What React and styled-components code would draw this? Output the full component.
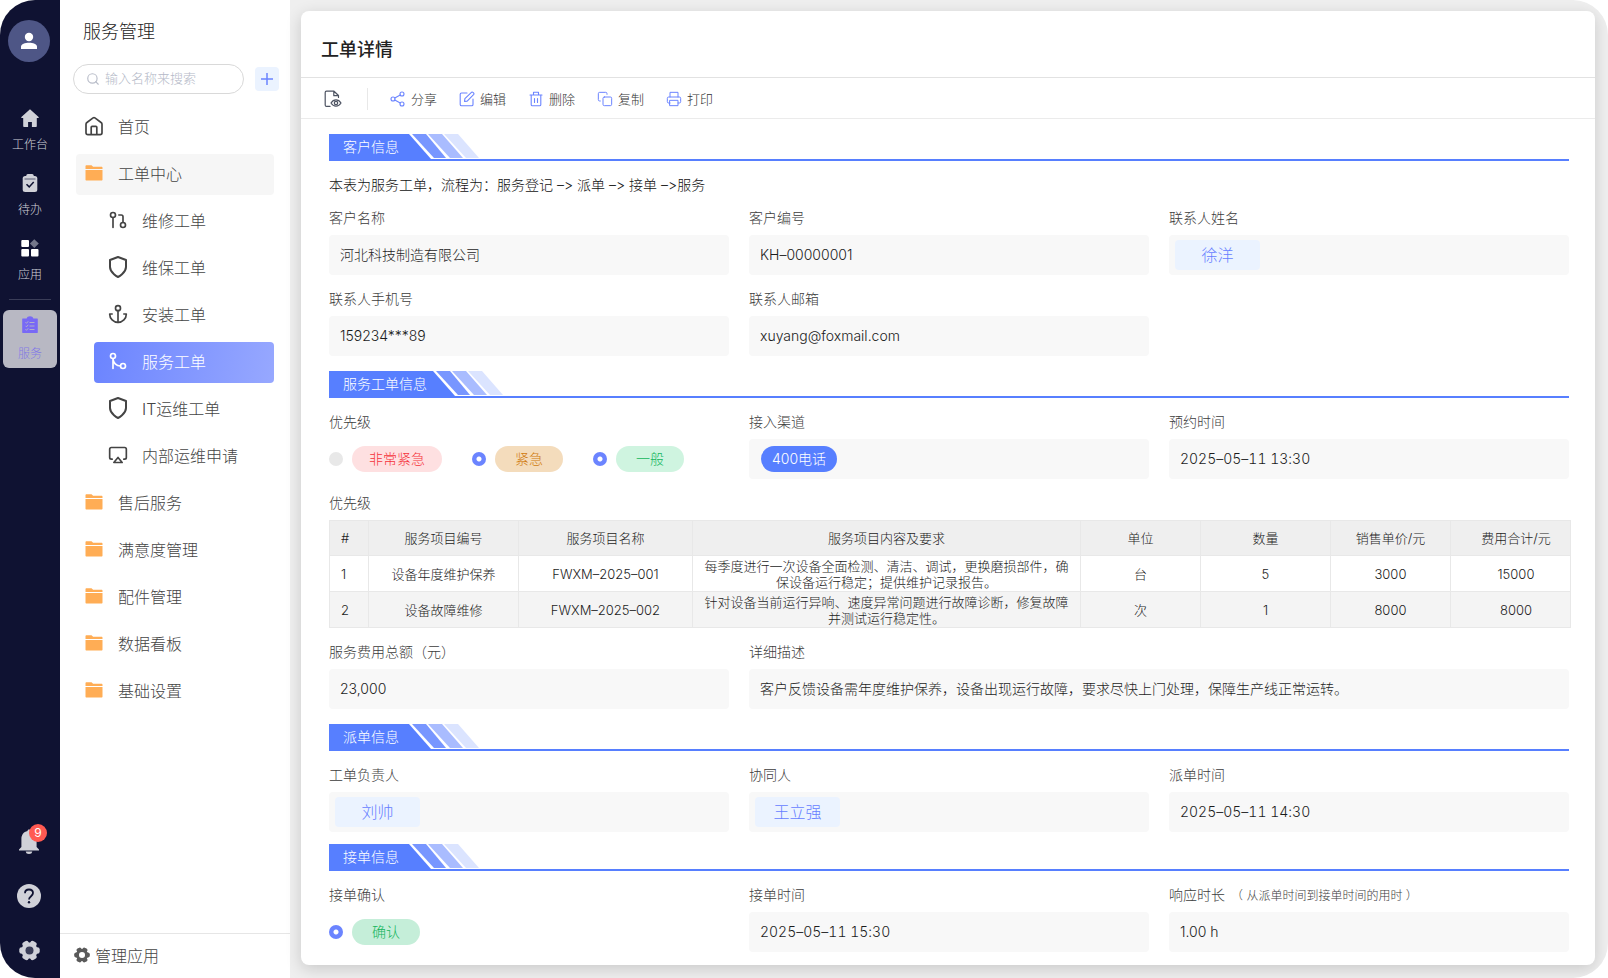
import React, { useState } from 'react'
import styled, { createGlobalStyle, css } from 'styled-components'
import { FiAirplay, FiAnchor, FiCopy, FiGitMerge, FiGitPullRequest, FiPrinter, FiSearch, FiShield } from 'react-icons/fi'

const GlobalStyle = createGlobalStyle`
  * {
    box-sizing: border-box;
  }
  body {
    margin: 0;
    background: #fff;
    color: #1c1c1c;
    font-family: Inter, 'Noto Sans CJK SC', sans-serif;
    font-size: 14px;
    font-weight: 300;
    font-feature-settings: 'calt' 0;
  }
  a {
    color: inherit;
    text-decoration: none;
  }
  button, input {
    font: inherit;
    font-feature-settings: inherit;
    color: inherit;
  }
  button {
    border: 0;
    padding: 0;
    background: none;
    cursor: pointer;
  }
  svg {
    display: block;
    flex: none;
  }
`

const Shell = styled.div`
  display: flex;
  min-height: 100vh;
  border-radius: 35px;
  overflow: hidden;
  background: #efefef;
`

/* rail */

const Rail = styled.nav`
  width: 60px;
  flex: none;
  display: flex;
  flex-direction: column;
  align-items: center;
  padding: 20px 0 16px;
  background: #0f1232;
  color: #d0d1d8;
`

const Avatar = styled.button`
  width: 42px;
  height: 42px;
  display: flex;
  align-items: center;
  justify-content: center;
  margin-right: 2px;
  border-radius: 50%;
  background: #4e5686;
  color: #fff;
`

const RailLinks = styled.div`
  display: flex;
  flex-direction: column;
  align-items: center;
  gap: 20px;
  margin-top: 47px;
`

const RailLink = styled.a`
  display: flex;
  flex-direction: column;
  align-items: center;
  gap: 9px;
  font-size: 12px;
  line-height: 18px;
  ${({ $active }) => $active && css`
    width: 54px;
    height: 58px;
    gap: 11px;
    padding-top: 6px;
    border-radius: 6px;
    background: #b8b8c3;
    color: #8379e6;
  `}
`

const RailDivider = styled.hr`
  width: 42px;
  height: 1px;
  margin: 15px 0 10px;
  border: 0;
  background: #3a3d58;
`

const RailBottom = styled.div`
  display: flex;
  flex-direction: column;
  gap: 30px;
  margin: auto 2px 0 0;
`

const RailButton = styled.button`
  position: relative;
  width: 24px;
  height: 24px;
  display: flex;
  align-items: center;
  justify-content: center;
`

const Count = styled.span`
  position: absolute;
  top: -6px;
  right: -6px;
  width: 18px;
  height: 18px;
  border-radius: 50%;
  background: #ff5a52;
  color: #fff;
  font-size: 12px;
  font-weight: 400;
  line-height: 18px;
  text-align: center;
`

/* sidebar */

const Sidebar = styled.aside`
  width: 230px;
  flex: none;
  display: flex;
  flex-direction: column;
  background: #fff;
  color: #444;
`

const AppName = styled.h2`
  margin: 18px 23px;
  color: #1c1c1c;
  font-size: 18px;
  font-weight: 300;
  line-height: 28px;
`

const SearchRow = styled.form`
  display: flex;
  align-items: center;
  gap: 11px;
  margin: 0 11px 13px 13px;
`

const SearchBox = styled.label`
  flex: 1;
  min-width: 0;
  height: 30px;
  display: flex;
  align-items: center;
  gap: 5px;
  padding: 0 12px;
  border: 1px solid #d9d9d9;
  border-radius: 15px;
  color: #b9bdc9;
`

const SearchInput = styled.input`
  width: 100%;
  min-width: 0;
  padding: 0 0 2px;
  border: 0;
  outline: none;
  background: none;
  font-size: 13px;
  &::placeholder {
    color: #b4b9c7;
  }
`

const AddButton = styled.button`
  width: 24px;
  height: 24px;
  display: flex;
  align-items: center;
  justify-content: center;
  border-radius: 4px;
  background: #ebf3ff;
  color: #6b84ff;
`

const Menu = styled.div`
  display: flex;
  flex-direction: column;
  gap: 6px;
  padding: 0 16px;
`

const MenuLink = styled.a`
  height: 41px;
  display: flex;
  align-items: center;
  gap: 12px;
  margin-left: ${({ $sub }) => ($sub ? '18px' : '0')};
  padding: 0 0 3px ${({ $sub }) => ($sub ? '12px' : '6px')};
  border-radius: 4px;
  font-size: 16px;
  background: ${({ $open }) => ($open ? '#f6f6f6' : 'none')};
  ${({ $active }) => $active && css`
    background: linear-gradient(100deg, #6b84ff, #97a8ff);
    color: #fff;
  `}
`

const MenuIcon = styled.span`
  width: 24px;
  display: flex;
  justify-content: center;
`

const ManageButton = styled.button`
  height: 45px;
  display: flex;
  align-items: center;
  gap: 5px;
  margin-top: auto;
  padding: 0 14px 2px;
  border-top: 1px solid #e6e6e6;
  font-size: 16px;
  svg {
    color: #5a5a5a;
  }
`

/* detail card */

const Main = styled.main`
  flex: 1;
  min-width: 0;
  display: flex;
  padding: 11px 13px 13px 11px;
`

const Card = styled.article`
  flex: 1;
  min-width: 0;
  border-radius: 8px;
  background: #fff;
  box-shadow: 0 4px 16px rgba(0, 0, 0, 0.16);
`

const CardTitle = styled.h1`
  height: 67px;
  margin: 0;
  padding: 11px 20px 0;
  border-bottom: 1px solid #e2e2e2;
  color: #222;
  font-size: 18px;
  font-weight: 500;
  line-height: 56px;
`

const Toolbar = styled.div`
  height: 41px;
  display: flex;
  align-items: center;
  gap: 22px;
  padding: 1px 23px 0;
  border-bottom: 1px solid #ebebeb;
`

const ToolDivider = styled.span`
  width: 1px;
  height: 22px;
  margin-left: 3px;
  background: #e8e8e8;
`

const ToolButton = styled.button`
  display: flex;
  align-items: center;
  gap: 5px;
  color: #333;
  font-size: 13px;
  svg {
    color: ${({ $plain }) => ($plain ? '#4d5362' : '#6b84ff')};
  }
`

const Body = styled.div`
  padding: 0 26px 13px 28px;
`

const Section = styled.section`
  padding-top: ${({ $tight }) => ($tight ? '12px' : '15px')};
`

const Banner = styled.header`
  height: 27px;
  display: flex;
  margin-bottom: 14px;
  border-bottom: 2px solid #577fff;
`

const BannerTitle = styled.h3`
  min-width: 80px;
  margin: 0;
  padding: 0 6px 0 14px;
  background: #577fff;
  color: #fff;
  font-size: 14px;
  font-weight: 300;
  line-height: 26px;
`

const Intro = styled.p`
  margin: 0 0 14px;
  color: #111;
  line-height: 19px;
`

const Grid = styled.div`
  display: grid;
  grid-template-columns: repeat(3, 1fr);
  gap: 14px 20px;
`

const FieldBox = styled.div`
  grid-column: span ${({ $span }) => $span || 1};
  min-width: 0;
`

const Label = styled.label`
  display: block;
  height: 20px;
  margin-bottom: 7px;
  color: #3c3c3c;
  line-height: 20px;
`

const Hint = styled.small`
  margin-left: 6px;
  font-size: 12px;
`

const Value = styled.input`
  display: block;
  width: 100%;
  height: 40px;
  padding: 0 11px 2px;
  border: 0;
  border-radius: 4px;
  outline: none;
  background: #f8f8f8;
  font-variant-numeric: ${({ $date }) => ($date ? 'tabular-nums' : 'normal')};
`

const ValueBox = styled.div`
  height: 40px;
  display: flex;
  align-items: center;
  padding: 0 ${({ $inset }) => $inset}px;
  border-radius: 4px;
  background: #f8f8f8;
`

const Person = styled.span`
  width: 85px;
  border-radius: 4px;
  background: #ebf3ff;
  color: #667eff;
  font-size: 16px;
  line-height: 30px;
  text-align: center;
`

const Channel = styled.span`
  min-width: 76px;
  padding: 0 9px;
  border-radius: 13px;
  background: #577fff;
  color: #fff;
  line-height: 26px;
  text-align: center;
`

const Options = styled.div`
  height: 40px;
  display: flex;
  align-items: center;
  gap: 30px;
`

const Option = styled.label`
  display: flex;
  align-items: center;
  gap: 9px;
`

const Radio = styled.input`
  appearance: none;
  width: 14px;
  height: 14px;
  margin: 0;
  border-radius: 50%;
  background: #e8e8e8;
  &:checked {
    background: radial-gradient(circle, #fff 2px, #6b84ff 3px);
  }
`

const Pill = styled.span`
  min-width: 68px;
  padding: 0 17px;
  border-radius: 13px;
  line-height: 26px;
  text-align: center;
  background: ${({ $bg }) => $bg};
  color: ${({ $color }) => $color};
`

const Table = styled.table`
  width: calc(100% + 2px);
  margin-bottom: 14px;
  border-collapse: collapse;
  table-layout: fixed;
  font-size: 13px;
  line-height: 16px;
  th, td {
    height: 36px;
    padding: 0 10px;
    border: 1px solid #e8e8e8;
    font-weight: 300;
    text-align: center;
  }
  th {
    height: 35px;
    background: #efefef;
  }
  tbody tr:nth-child(even) {
    background: #f4f4f4;
  }
  th:first-child, td:first-child {
    padding-left: 11px;
    text-align: left;
  }
  th:last-child, td:last-child {
    padding: 0 0 0 11px;
  }
`

const TableLabel = styled.div`
  margin: 14px 0 7px;
  color: #3c3c3c;
  line-height: 20px;
`

/* icons */

const UserIcon = () => (
  <svg width="18" height="18" viewBox="0 0 18 18" fill="currentColor">
    <circle cx="9" cy="5" r="4.2" />
    <path d="M1 17v-2.2C1 12 5 10.800 9 10.800s8 1.200 8 4V17z" />
  </svg>
)

const HouseIcon = () => (
  <svg width="18" height="18" viewBox="0 0 18 18" fill="currentColor">
    <path d="M9 0.200 0.400 8.100c-.5.500-.2 1 .4 1H2.200v8.100c0 .4.300.8.800.8h4.100v-5h3.800v5H15c.5 0 .8-.4.800-.8V9.100h1.400c.6 0 .9-.5.400-1z" />
  </svg>
)

const TodoIcon = () => (
  <svg width="18" height="18" viewBox="0 0 18 18">
    <rect x="1.700" y="2" width="14.600" height="16" rx="2.500" fill="#d0d1d8" />
    <rect x="5.300" y="0" width="7.400" height="5" rx="1.500" fill="#d0d1d8" />
    <path d="M3.500 5h11" stroke="#5a5c74" strokeWidth="1" />
    <path d="m5.500 10.200 2.700 2.700 4.500-5" fill="none" stroke="#0f1232" strokeWidth="1.500" />
  </svg>
)

const AppsIcon = () => (
  <svg width="18" height="18" viewBox="0 0 18 18" fill="#fff">
    <rect x="0.300" y="1" width="7.700" height="7" rx="1" />
    <rect x="0.300" y="10" width="7.700" height="7.500" rx="1" />
    <rect x="10" y="10" width="7.500" height="7.500" rx="1" />
    <path d="m13.300 0.200 4.500 4.300-4.500 4.400L8.900 4.500z" fill="#73768a" />
  </svg>
)

const ServiceIcon = () => (
  <svg width="18" height="18" viewBox="0 0 18 18">
    <path d="M1.700 2.500h4C6 1 7.300.3 9 .3s3 .7 3.300 2.200h4c.3 0 .5.2.5.500v13.500c0 .3-.2.500-.5.500H1.700c-.3 0-.5-.2-.5-.5V3c0-.3.200-.5.500-.5z" fill="#7869f5" />
    <path d="M8.500 6.500h5M8.500 10h5M8.500 13.500h5M4.500 6.300l1 1 1.700-2M4.500 9.800l1 1 1.700-2M4.500 13.300l1 1 1.700-2" fill="none" stroke="#b8b8c3" strokeWidth="0.900" />
  </svg>
)

const BellIcon = () => (
  <svg width="22" height="26" viewBox="0 0 22 26" fill="currentColor">
    <path d="M11 .5C10 .5 9.500 1.200 9.500 2 5.500 2.800 3.400 6 3.400 10v8L1 20.500v1h20v-1L18.600 18v-8c0-4-2.100-7.200-6.100-8 0-.8-.5-1.500-1.500-1.500zM7.700 22.500h6.600c-.2 1.700-1.500 2.500-3.300 2.500s-3.100-.8-3.300-2.500z" />
  </svg>
)

const HelpIcon = () => (
  <svg width="24" height="24" viewBox="0 0 24 24">
    <circle cx="12" cy="12" r="12" fill="#d0d1d8" />
    <path d="M8 9.200C8 6.800 9.700 5.500 12 5.500s4 1.400 4 3.600c0 3-4 3.200-4 6.400" fill="none" stroke="#0f1232" strokeWidth="1.800" />
    <circle cx="12" cy="18.200" r="1.200" fill="#0f1232" />
  </svg>
)

const GearIcon = ({ size, hole }) => (
  <svg width={size} height={size} viewBox="0 0 22 22" fill="currentColor">
    <circle cx="11" cy="11" r="8.500" />
    {[0, 60, 120].map((angle) => (
      <rect key={angle} x="0.300" y="7.500" width="21.400" height="7" rx="2.500" transform={`rotate(${angle} 11 11)`} />
    ))}
    <circle cx="11" cy="11" r="4.200" fill={hole} />
  </svg>
)

const HomeIcon = () => (
  <svg width="20" height="20" viewBox="0 0 20 20" fill="none" stroke="currentColor" strokeWidth="1.700" strokeLinejoin="round">
    <path d="M2 8.200c0-.8.300-1.300.9-1.700l6.200-4.600c.6-.4 1.200-.4 1.800 0l6.200 4.600c.6.400.9.900.9 1.700v8.500c0 1.200-.7 1.900-1.900 1.900H3.900c-1.200 0-1.900-.7-1.900-1.900z" />
    <path d="M7.200 18.500v-7.200c0-.6.300-.9.900-.9h3.800c.6 0 .9.300.9.900v7.200" />
  </svg>
)

const FolderIcon = () => (
  <svg width="18" height="16" viewBox="0 0 18 16" fill="#ffad55">
    <path d="M.5 4V1.200C.5.500.9.200 1.500.2h5l1.600 1.500h8.400c.6 0 1 .4 1 1V4z" />
    <path d="M.5 5h17v9.500c0 .6-.4 1-1 1h-15c-.6 0-1-.4-1-1z" />
  </svg>
)

const PlusIcon = () => (
  <svg width="12" height="12" viewBox="0 0 12 12" stroke="currentColor" strokeWidth="1.500">
    <path d="M6 0v12M0 6h12" />
  </svg>
)

const line = { width: 16, height: 16, viewBox: '0 0 16 16', fill: 'none', stroke: 'currentColor', strokeWidth: 1.1, strokeLinecap: 'round', strokeLinejoin: 'round' }

const PreviewIcon = () => (
  <svg {...line} width="18" height="18" viewBox="0 0 18 18" strokeWidth="1.200">
    <path d="M6 16.400H2.500c-.8 0-1.300-.5-1.300-1.300V2.500c0-.8.500-1.300 1.300-1.300H10L14.500 5.500V7.500M9.800 1.500v4.200h4.500" />
    <path d="M7 13c2.600-4.200 7.400-4.200 10 0-2.600 4.200-7.400 4.200-10 0z" />
    <circle cx="12" cy="13" r="1.700" />
  </svg>
)

const ShareIcon = () => (
  <svg {...line}>
    <circle cx="3" cy="8" r="2" />
    <circle cx="12" cy="3" r="2" />
    <circle cx="12" cy="13" r="2" />
    <path d="m4.800 7 5.400-3M4.800 9l5.400 3" />
  </svg>
)

const EditIcon = () => (
  <svg {...line}>
    <path d="M8 2H2.500C1.700 2 1.200 2.500 1.200 3.300v10.200c0 .8.500 1.300 1.300 1.300h10.200c.8 0 1.300-.5 1.300-1.300V8" />
    <path d="m5.500 10.500.4-2.800 6.800-6.500c.7-.6 2.800 1.300 2.100 2.100l-6.600 6.800z" />
  </svg>
)

const TrashIcon = () => (
  <svg {...line}>
    <path d="M2 4h12M5.500 3.800V1.200h5v2.600M3.200 4v9.700c0 .7.400 1.100 1.100 1.100h7.400c.7 0 1.100-.4 1.100-1.100V4M6.500 7.500v4M9.500 7.500v4" />
  </svg>
)

const tools = [
  { text: '分享', icon: <ShareIcon /> },
  { text: '编辑', icon: <EditIcon /> },
  { text: '删除', icon: <TrashIcon /> },
  { text: '复制', icon: <FiCopy size={16} strokeWidth={1.5} /> },
  { text: '打印', icon: <FiPrinter size={16} strokeWidth={1.5} /> },
]

const menu = [
  { text: '首页', icon: <HomeIcon /> },
  { text: '工单中心', icon: <FolderIcon />, open: true },
  { text: '维修工单', icon: <FiGitPullRequest size={20} />, sub: true },
  { text: '维保工单', icon: <FiShield size={24} />, sub: true },
  { text: '安装工单', icon: <FiAnchor size={20} />, sub: true },
  { text: '服务工单', icon: <FiGitMerge size={20} />, sub: true },
  { text: 'IT运维工单', icon: <FiShield size={24} />, sub: true },
  { text: '内部运维申请', icon: <FiAirplay size={20} />, sub: true },
  { text: '售后服务', icon: <FolderIcon /> },
  { text: '满意度管理', icon: <FolderIcon /> },
  { text: '配件管理', icon: <FolderIcon /> },
  { text: '数据看板', icon: <FolderIcon /> },
  { text: '基础设置', icon: <FolderIcon /> },
]

const columns = [
  ['#', 39],
  ['服务项目编号', 150],
  ['服务项目名称', 174],
  ['服务项目内容及要求', 388],
  ['单位', 120],
  ['数量', 130],
  ['销售单价/元', 120],
  ['费用合计/元', 120],
]

const rows = [
  ['1', '设备年度维护保养', 'FWXM–2025–001', '每季度进行一次设备全面检测、清洁、调试，更换磨损部件，确保设备运行稳定；提供维护记录报告。', '台', '5', '3000', '15000'],
  ['2', '设备故障维修', 'FWXM–2025–002', '针对设备当前运行异响、速度异常问题进行故障诊断，修复故障并测试运行稳定性。', '次', '1', '8000', '8000'],
]

const SectionBanner = ({ title }) => (
  <Banner>
    <BannerTitle>{title}</BannerTitle>
    <svg width="72" height="25" viewBox="0 0 72 25">
      <path d="M0 0 22 25H0z" fill="#577fff" />
      <path d="M3 0h14l20 24H25z" fill="#7896ff" />
      <path d="M19 0h14l21 24H41z" fill="#a9bcff" />
      <path d="M35 0h14l21 24H57z" fill="#dbe4ff" />
    </svg>
  </Banner>
)

const Field = ({ id, label, hint, value, date, span, children }) => (
  <FieldBox $span={span}>
    <Label as={children ? 'div' : 'label'} htmlFor={children ? undefined : id}>
      {label}
      {hint && <Hint>{hint}</Hint>}
    </Label>
    {children || <Value id={id} value={value} $date={date} readOnly />}
  </FieldBox>
)

const Choice = ({ text, bg, color, defaultChecked, name }) => (
  <Option>
    <Radio type="radio" name={name} defaultChecked={defaultChecked} />
    <Pill $bg={bg} $color={color}>{text}</Pill>
  </Option>
)

export default function App() {
  const [active, setActive] = useState('服务工单')
  const [keyword, setKeyword] = useState('')

  return (
    <>
      <GlobalStyle />
      <Shell>
        <Rail>
          <Avatar type="button"><UserIcon /></Avatar>
          <RailLinks>
            <RailLink href="#desk"><HouseIcon />工作台</RailLink>
            <RailLink href="#todo"><TodoIcon />待办</RailLink>
            <RailLink href="#apps"><AppsIcon />应用</RailLink>
          </RailLinks>
          <RailDivider />
          <RailLink href="#service" $active><ServiceIcon />服务</RailLink>
          <RailBottom>
            <RailButton type="button"><BellIcon /><Count>9</Count></RailButton>
            <RailButton type="button"><HelpIcon /></RailButton>
            <RailButton type="button"><GearIcon size={21} hole="#3b3e58" /></RailButton>
          </RailBottom>
        </Rail>

        <Sidebar>
          <AppName>服务管理</AppName>
          <SearchRow onSubmit={(e) => e.preventDefault()}>
            <SearchBox>
              <FiSearch size={14} />
              <SearchInput
                type="text"
                placeholder="输入名称来搜索"
                value={keyword}
                onChange={(e) => setKeyword(e.target.value)}
              />
            </SearchBox>
            <AddButton type="button"><PlusIcon /></AddButton>
          </SearchRow>
          <Menu>
            {menu.map((item) => (
              <MenuLink
                key={item.text}
                href="#menu"
                $sub={item.sub}
                $open={item.open}
                $active={item.text === active}
                onClick={() => setActive(item.text)}
              >
                <MenuIcon>{item.icon}</MenuIcon>
                {item.text}
              </MenuLink>
            ))}
          </Menu>
          <ManageButton type="button"><GearIcon size={16} hole="#fff" />管理应用</ManageButton>
        </Sidebar>

        <Main>
          <Card>
            <CardTitle>工单详情</CardTitle>
            <Toolbar>
              <ToolButton type="button" $plain><PreviewIcon /></ToolButton>
              <ToolDivider />
              {tools.map((tool) => (
                <ToolButton type="button" key={tool.text}>{tool.icon}{tool.text}</ToolButton>
              ))}
            </Toolbar>
            <Body>
              <Section>
                <SectionBanner title="客户信息" />
                <Intro>本表为服务工单，流程为：服务登记 –&gt; 派单 –&gt; 接单 –&gt;服务</Intro>
                <Grid>
                  <Field id="name" label="客户名称" value="河北科技制造有限公司" />
                  <Field id="code" label="客户编号" value="KH–00000001" />
                  <Field label="联系人姓名"><ValueBox $inset={6}><Person>徐洋</Person></ValueBox></Field>
                  <Field id="phone" label="联系人手机号" value="159234***89" />
                  <Field id="mail" label="联系人邮箱" value="xuyang@foxmail.com" />
                </Grid>
              </Section>

              <Section>
                <SectionBanner title="服务工单信息" />
                <Grid>
                  <Field label="优先级">
                    <Options>
                      <Choice name="urgent" text="非常紧急" bg="#fee0e1" color="#f5333a" />
                      <Choice name="high" text="紧急" bg="#f4dcbc" color="#d07a0c" defaultChecked />
                      <Choice name="normal" text="一般" bg="#cff4e0" color="#12b45c" defaultChecked />
                    </Options>
                  </Field>
                  <Field label="接入渠道"><ValueBox $inset={12}><Channel>400电话</Channel></ValueBox></Field>
                  <Field id="booked" label="预约时间" value="2025–05–11 13:30" date />
                </Grid>
                <TableLabel>优先级</TableLabel>
                <Table>
                  <colgroup>
                    {columns.map(([text, width]) => <col key={text} style={{ width: `${(width / 1241) * 100}%` }} />)}
                  </colgroup>
                  <thead>
                    <tr>{columns.map(([text]) => <th key={text}>{text}</th>)}</tr>
                  </thead>
                  <tbody>
                    {rows.map((row) => (
                      <tr key={row[0]}>{row.map((cell, i) => <td key={i}>{cell}</td>)}</tr>
                    ))}
                  </tbody>
                </Table>
                <Grid>
                  <Field id="total" label="服务费用总额（元）" value="23,000" />
                  <Field id="desc" span={2} label="详细描述" value="客户反馈设备需年度维护保养，设备出现运行故障，要求尽快上门处理，保障生产线正常运转。" />
                </Grid>
              </Section>

              <Section>
                <SectionBanner title="派单信息" />
                <Grid>
                  <Field label="工单负责人"><ValueBox $inset={6}><Person>刘帅</Person></ValueBox></Field>
                  <Field label="协同人"><ValueBox $inset={6}><Person>王立强</Person></ValueBox></Field>
                  <Field id="assigned" label="派单时间" value="2025–05–11 14:30" date />
                </Grid>
              </Section>

              <Section $tight>
                <SectionBanner title="接单信息" />
                <Grid>
                  <Field label="接单确认">
                    <Options>
                      <Choice name="confirm" text="确认" bg="#c5eed9" color="#12b45c" defaultChecked />
                    </Options>
                  </Field>
                  <Field id="accepted" label="接单时间" value="2025–05–11 15:30" date />
                  <Field id="response" label="响应时长" hint="（ 从派单时间到接单时间的用时 ）" value="1.00 h" />
                </Grid>
              </Section>
            </Body>
          </Card>
        </Main>
      </Shell>
    </>
  )
}
